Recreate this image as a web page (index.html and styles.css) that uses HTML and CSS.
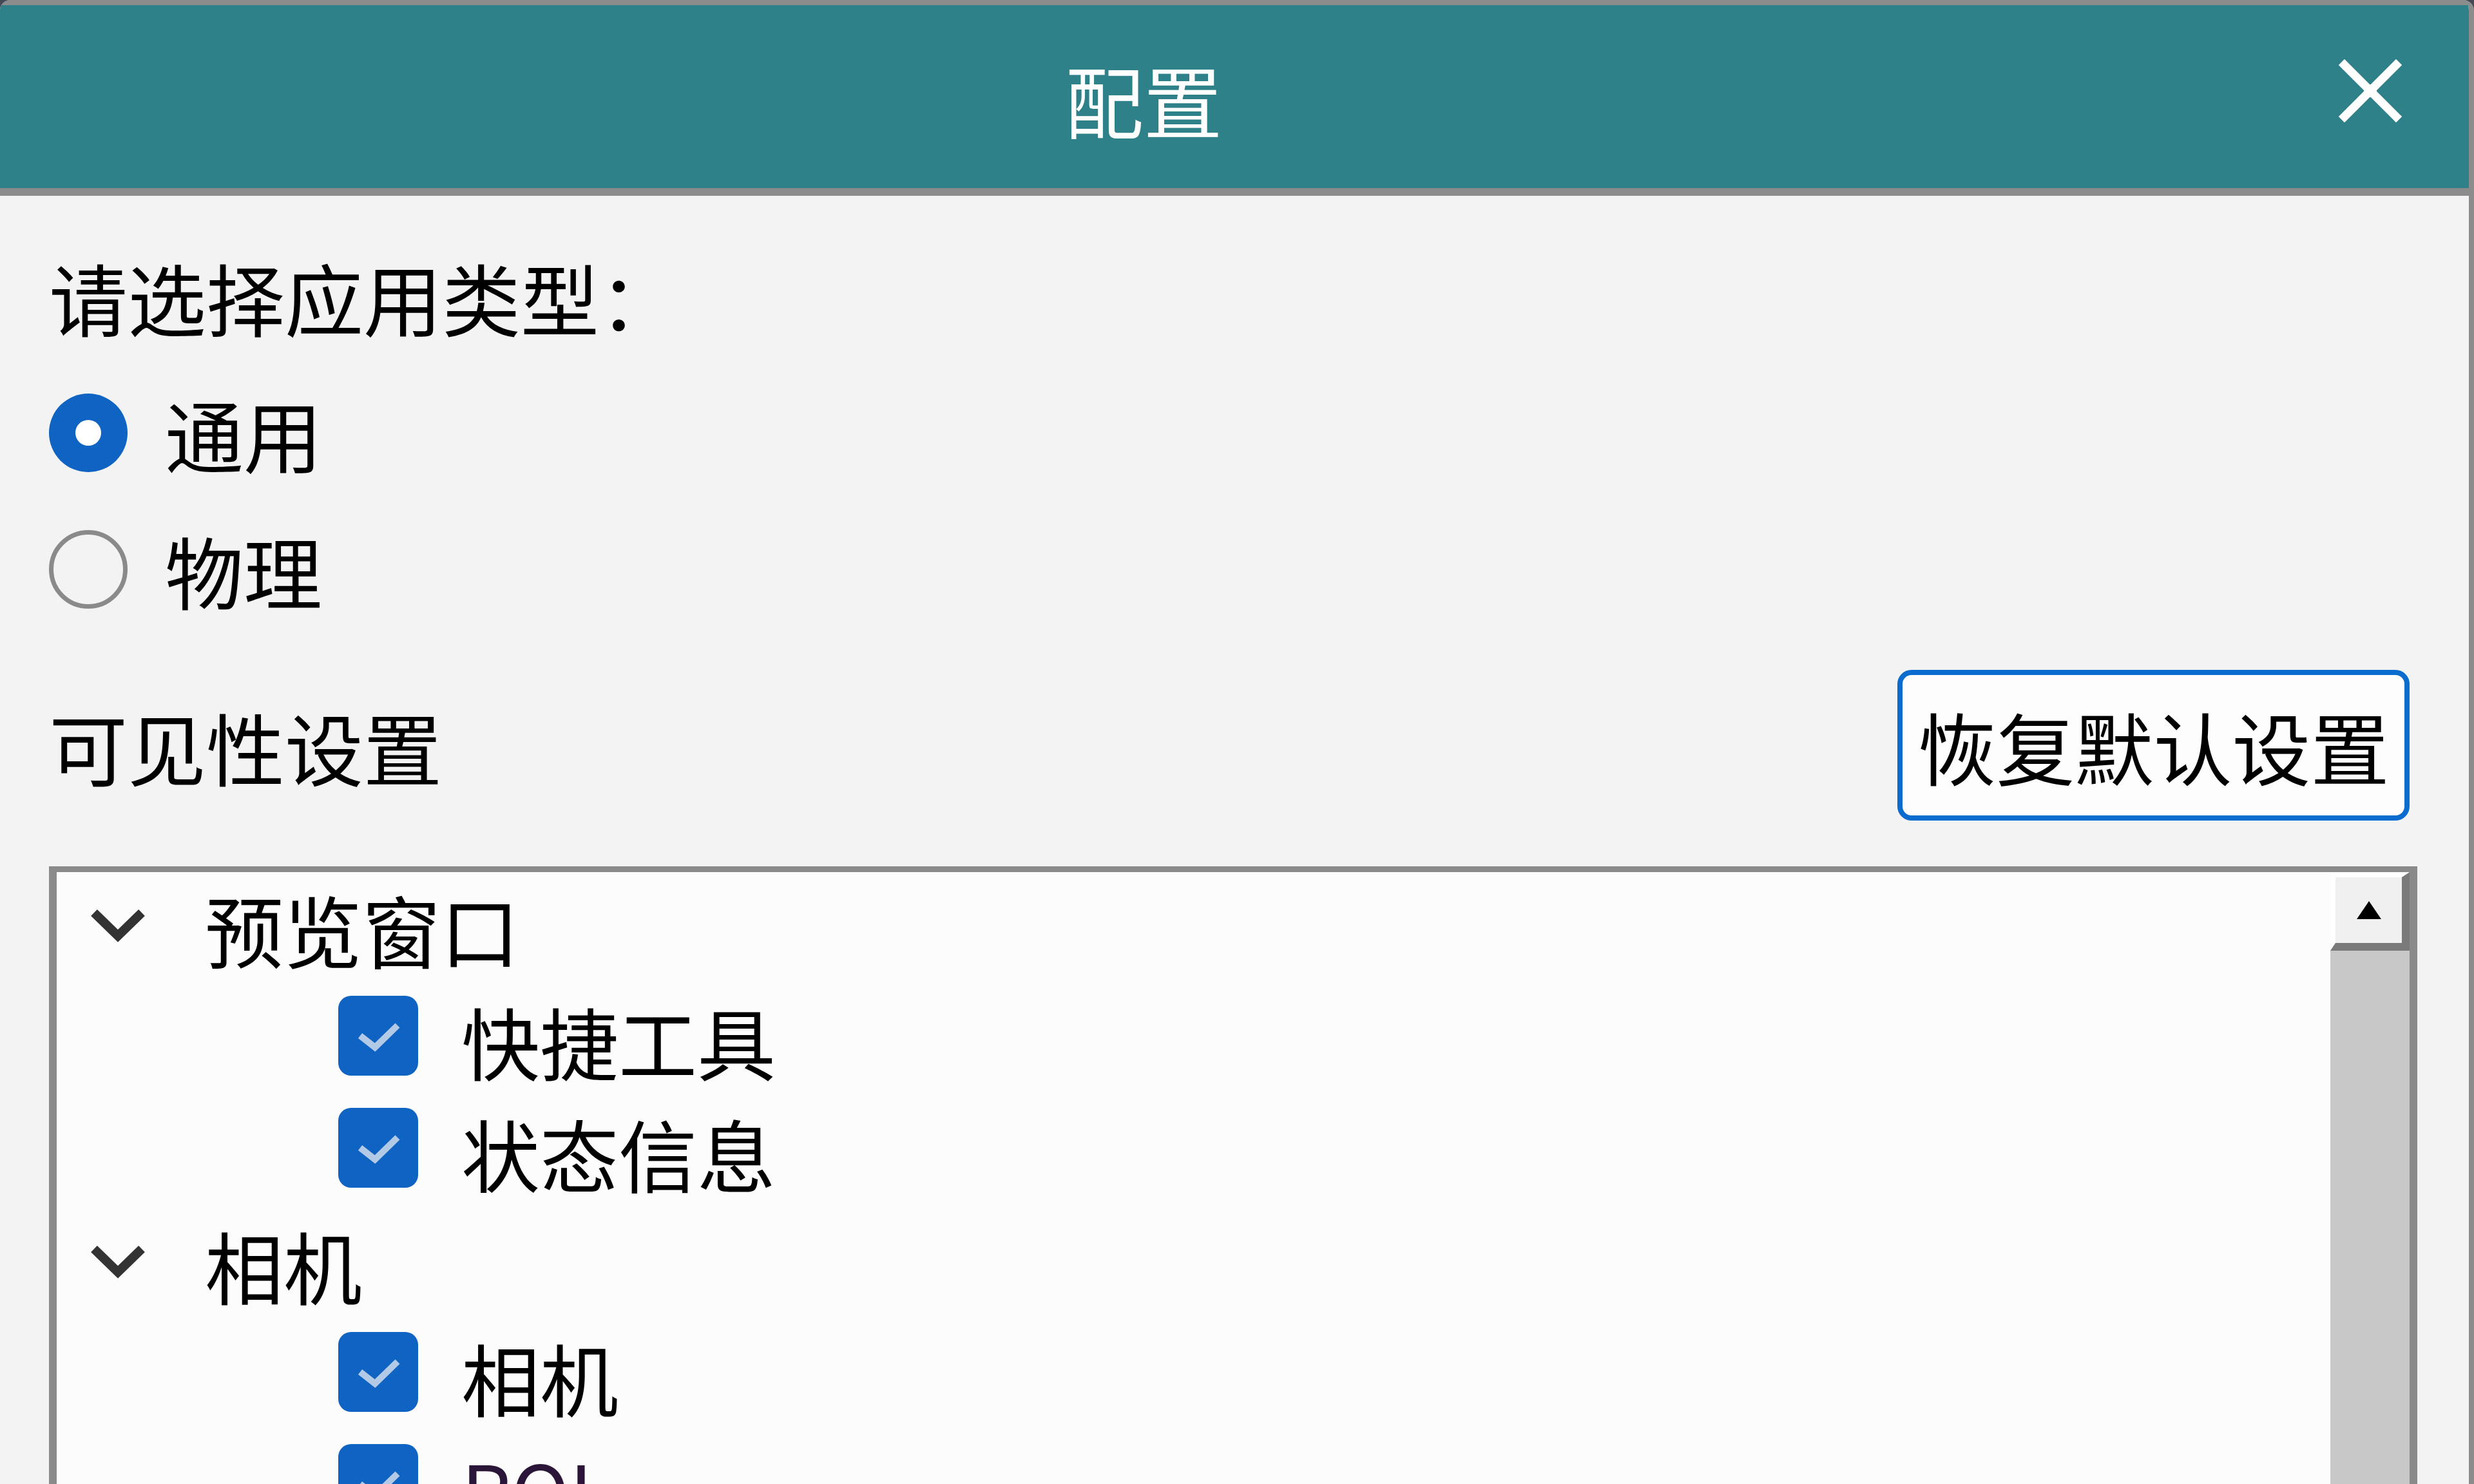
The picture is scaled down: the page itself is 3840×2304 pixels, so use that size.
FILE: index.html
```html
<!DOCTYPE html>
<html lang="zh-CN">

<head>
    <meta charset="UTF-8">
    <meta name="viewport" content="width=device-width, initial-scale=1.0">
    <title>配置</title>
    <link rel="stylesheet" href="styles.css">
</head>

<body>
    <div class="window">
        <div class="titlebar">
            <div class="title">配置</div>
            <div class="close">
                <svg width="100" height="100" viewBox="0 0 100 100">
                    <path d="M10 10 L90 90 M90 10 L10 90" stroke="#fff" stroke-width="13" stroke-linecap="square" />
                    <rect x="40" y="40" width="20" height="20" fill="#fff" />
                </svg>
            </div>
        </div>

        <div class="content">
            <div class="label">请选择应用类型：</div>

            <div class="radio-group">
                <div class="radio-row">
                    <span class="radio checked"></span>
                    <span class="radio-text">通用</span>
                </div>
                <div class="radio-row">
                    <span class="radio"></span>
                    <span class="radio-text">物理</span>
                </div>
            </div>

            <div class="visibility-row">
                <span>可见性设置</span>
                <button class="reset-btn">恢复默认设置</button>
            </div>

            <div class="tree-box">
                <div class="tree">
                    <div class="tree-row parent">
                        <svg class="chevron" width="94" height="62" viewBox="0 0 94 62">
                            <polyline points="10,12 47,48 84,12" fill="none" stroke="#333" stroke-width="14" />
                        </svg>
                        <span class="tree-text">预览窗口</span>
                    </div>
                    <div class="tree-row child">
                        <span class="checkbox">
                            <svg width="124" height="124" viewBox="0 0 124 124">
                                <polyline points="34,62 57,80 92,46" fill="none" stroke="#b3cae6" stroke-width="10" />
                            </svg>
                        </span>
                        <span class="tree-text">快捷工具</span>
                    </div>
                    <div class="tree-row child">
                        <span class="checkbox">
                            <svg width="124" height="124" viewBox="0 0 124 124">
                                <polyline points="34,62 57,80 92,46" fill="none" stroke="#b3cae6" stroke-width="10" />
                            </svg>
                        </span>
                        <span class="tree-text">状态信息</span>
                    </div>
                    <div class="tree-row parent">
                        <svg class="chevron" width="94" height="62" viewBox="0 0 94 62">
                            <polyline points="10,12 47,48 84,12" fill="none" stroke="#333" stroke-width="14" />
                        </svg>
                        <span class="tree-text">相机</span>
                    </div>
                    <div class="tree-row child">
                        <span class="checkbox">
                            <svg width="124" height="124" viewBox="0 0 124 124">
                                <polyline points="34,62 57,80 92,46" fill="none" stroke="#b3cae6" stroke-width="10" />
                            </svg>
                        </span>
                        <span class="tree-text">相机</span>
                    </div>
                    <div class="tree-row child">
                        <span class="checkbox">
                            <svg width="124" height="124" viewBox="0 0 124 124">
                                <polyline points="34,62 57,80 92,46" fill="none" stroke="#b3cae6" stroke-width="10" />
                            </svg>
                        </span>
                        <span class="tree-text roi">ROI</span>
                    </div>
                </div>

                <div class="scrollbar">
                    <div class="scroll-up">
                        <svg width="42" height="32" viewBox="0 0 42 32">
                            <polygon points="21,2 40,30 2,30" fill="#000" />
                        </svg>
                    </div>
                </div>
            </div>
        </div>
    </div>
</body>

</html>
```

FILE: styles.css
```css
body {
    margin: 0;
    padding: 0;
    overflow: hidden;
    background-color: #444955;
    font-family: "Noto Sans CJK SC", sans-serif;
    font-size: 122px;
    color: #000;
}

.window {
    width: 3840px;
    height: 2304px;
    box-sizing: border-box;
    display: flex;
    flex-direction: column;
    background-color: #f3f3f3;
    border-right: 8px solid #8c8c8c;
    border-radius: 16px 16px 0 0;
    overflow: hidden;
}

.titlebar {
    height: 304px;
    box-sizing: border-box;
    display: flex;
    align-items: center;
    background-color: #2e8089;
    border-top: 8px solid #8c8c8c;
    border-bottom: 12px solid #8c8c8c;
}

.title {
    flex: 1;
    text-align: center;
    color: #fff;
    padding-left: 24px;
    padding-top: 6px;
    line-height: 160px;
}

.close {
    width: 306px;
    display: flex;
    justify-content: center;
    margin-bottom: 18px;
}

.content {
    flex: 1;
    display: flex;
    flex-direction: column;
    padding: 76px 80px 0 76px;
    min-height: 0;
}

.label {
    line-height: 160px;
}

.radio-group {
    margin-top: 26px;
}

.radio-row {
    height: 212px;
    display: flex;
    align-items: center;
}

.radio {
    width: 122px;
    height: 122px;
    box-sizing: border-box;
    border-radius: 50%;
    border: 7px solid #8a8a8a;
    position: relative;
}

.radio.checked {
    border: none;
    background-color: #0f63c3;
}

.radio.checked::after {
    content: "";
    position: absolute;
    left: 41px;
    top: 41px;
    width: 40px;
    height: 40px;
    border-radius: 50%;
    background-color: #fff;
}

.radio-text {
    margin-left: 58px;
    line-height: 160px;
}

.visibility-row {
    margin-top: 50px;
    height: 234px;
    display: flex;
    justify-content: space-between;
    align-items: center;
    padding-right: 12px;
}

.reset-btn {
    width: 795px;
    height: 234px;
    box-sizing: border-box;
    padding: 0;
    border: 8px solid #0a6cce;
    border-radius: 22px;
    background-color: #fdfdfd;
    font-family: inherit;
    font-size: 122px;
    line-height: 160px;
    color: #000;
}

.tree-box {
    margin-top: 71px;
    flex: 1;
    display: flex;
    border-style: solid;
    border-color: #8a8a8a;
    border-width: 9px 12px 0 12px;
    background-color: #fcfcfc;
    min-height: 0;
    overflow: hidden;
}

.tree {
    flex: 1;
}

.tree-row {
    height: 174px;
    display: flex;
    align-items: center;
}

.tree-row.parent {
    padding-left: 48px;
}

.tree-row.child {
    padding-left: 437px;
}

.chevron {
    margin-bottom: 10px;
}

.parent .tree-text {
    margin-left: 88px;
}

.child .tree-text {
    margin-left: 67px;
}

.tree-text {
    line-height: 160px;
}

.roi {
    color: #2b1538;
}

.checkbox {
    width: 124px;
    height: 124px;
    border-radius: 20px;
    background-color: #0f63c3;
    margin-bottom: 14px;
    display: flex;
}

.scrollbar {
    width: 123px;
    background-color: #c8c8c8;
}

.scroll-up {
    height: 122px;
    box-sizing: border-box;
    display: flex;
    justify-content: center;
    align-items: center;
    background-color: #f0f0f0;
    border-top: 8px solid #fff;
    border-left: 8px solid #fff;
    border-right: 12px solid #7a7a7a;
    border-bottom: 12px solid #7a7a7a;
}
```
